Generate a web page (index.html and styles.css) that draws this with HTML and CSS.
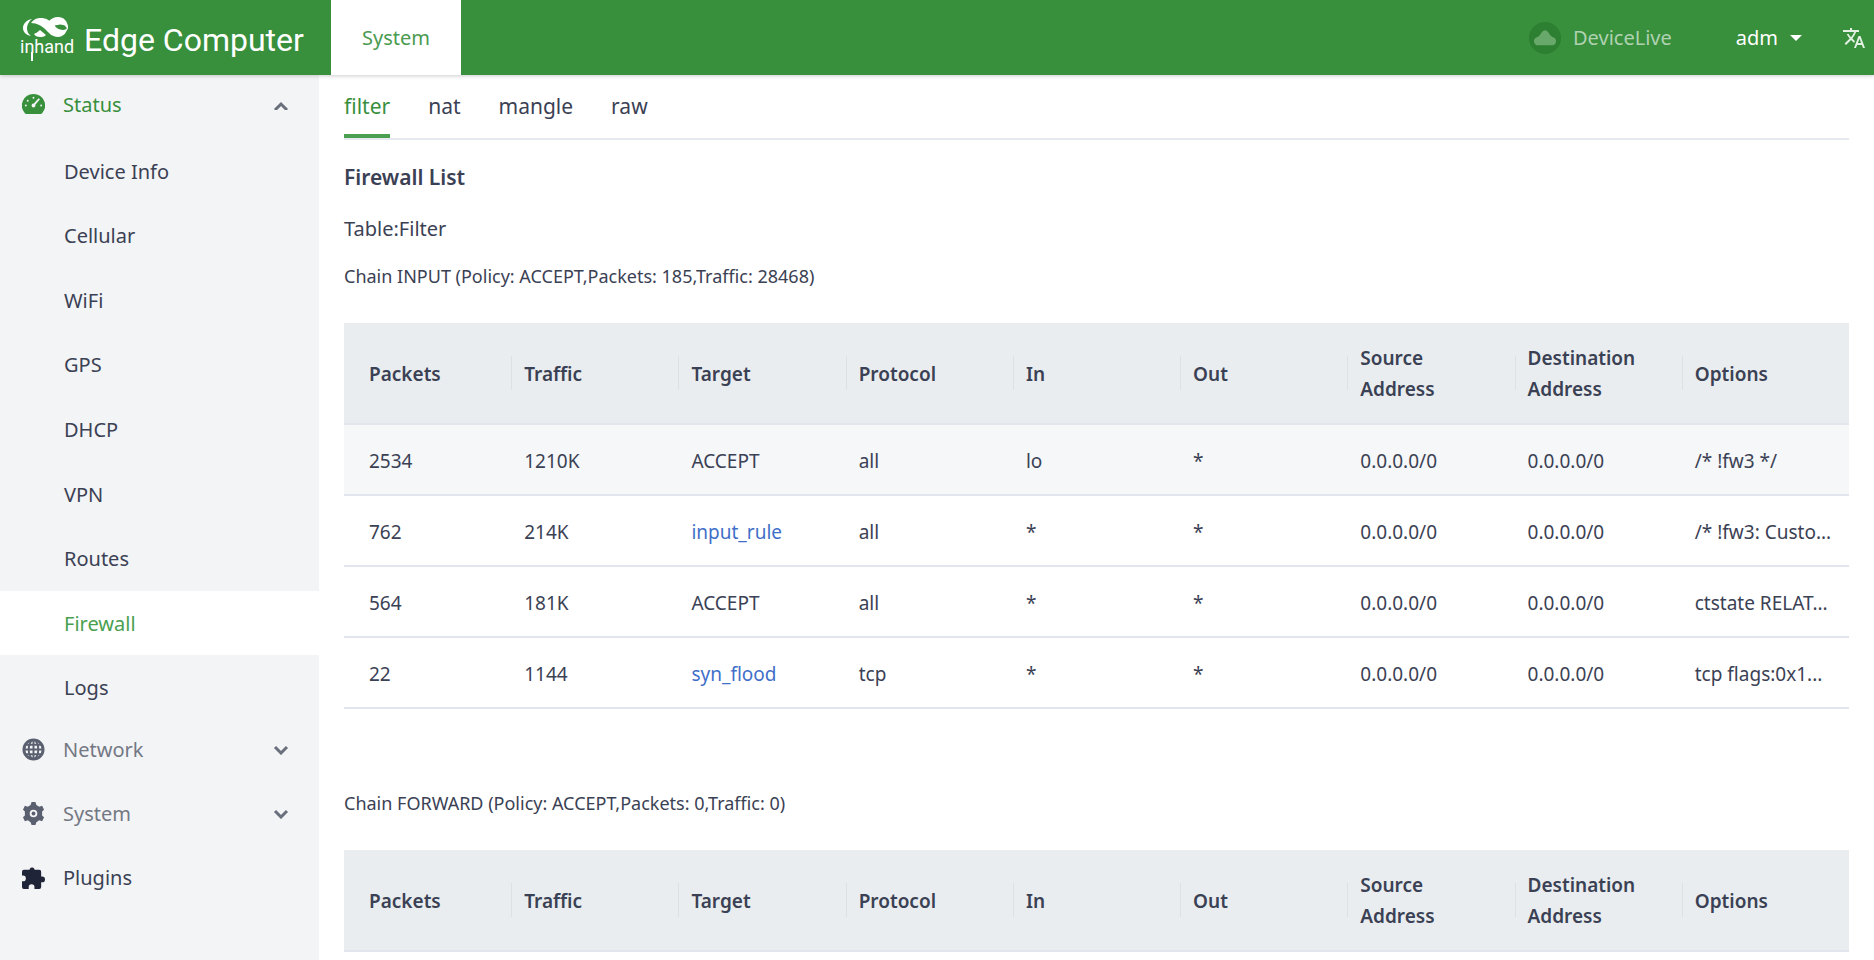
FILE: index.html
```html
<!DOCTYPE html>
<html lang="en">
<head>
  <meta charset="UTF-8" />
  <meta name="viewport" content="width=device-width, initial-scale=1.0" />
  <title>Edge Computer</title>
  <link rel="stylesheet" href="styles.css">
</head>
<body>
  <header class="topbar">
    <a class="brand" href="#">
      <svg class="brand-logo" viewBox="0 0 54 46" role="img" aria-label="inhand">
        <g fill="#fff">
          <path d="M12 2C6 3 3 7 3 11s3 7 8 8C8 17 7 14 7 11s2-7 5-9z"/>
          <path d="M11 6c3-4 6-5 10-5 5 0 8 2 12 6 3 3 6 6 10 6 2 0 4-1 5-4-1 7-5 11-10 11-6 0-9-4-12-7-4-4-9-7-15-7z"/>
          <path d="M29 4c2-2 5-4 9-4 6 0 9 4 10 9v4c-1-3-4-5-8-5-2 0-4 0-6 1z"/>
          <path d="M20 13l6 5c-2 2-4 2-6 2-3 0-5-1-6-3 2-1 4-2 6-4z"/>
        </g>
        <path d="M35 9q5-3 11 0-5 4-9 2z" fill="#388f3c"/>
        <text class="brand-small" x="0" y="36">inhand</text>
        <path d="M12 35v9" stroke="#fff" stroke-width="2"/>
      </svg>
      <span class="brand-name">Edge Computer</span>
    </a>
    <a class="top-tab" href="#">System</a>
    <div class="top-right">
      <a class="device-live" href="#">
        <span class="cloud">
          <svg viewBox="0 0 24 24" width="22" height="22" aria-hidden="true"><path d="M19 20H5a4 4 0 0 1-1-9q2-1 3-3 5-9 10 0 1 2 3 3a4 4 0 0 1-1 9z" fill="#68a96b"/></svg>
        </span>
        DeviceLive
      </a>
      <button class="user-btn" type="button">adm <span class="caret"></span></button>
      <button class="lang-btn" type="button" aria-label="Language">
        <svg viewBox="0 0 24 24" width="24" height="24" aria-hidden="true"><path fill="#e4f0e4" d="M12.87 15.07l-2.54-2.51.03-.03A17.52 17.52 0 0 0 14.07 6H17V4h-7V2H8v2H1v2h11.17C11.5 7.92 10.44 9.75 9 11.35 8.07 10.32 7.3 9.19 6.69 8h-2c.73 1.63 1.73 3.17 2.98 4.56l-5.09 5.02L4 19l5-5 3.11 3.11.76-2.04zM18.5 10h-2L12 22h2l1.12-3h4.75L21 22h2l-4.5-12zm-2.62 7l1.62-4.33L19.12 17h-3.24z"/></svg>
      </button>
    </div>
  </header>

  <div class="layout">
    <nav class="sidebar">
      <button class="menu-head active" type="button">
        <svg class="menu-icon" viewBox="0 0 24 24" aria-hidden="true"><path d="M12 1a12 12 0 0 0-9 20q1 1 2 1h14q1 0 2-1A12 12 0 0 0 12 1z" fill="#388f3c"/><g fill="#f3f4f6"><circle cx="4" cy="13" r="1"/><circle cx="6" cy="8" r="1"/><circle cx="12" cy="5" r="1"/><circle cx="20" cy="13" r="1"/><circle cx="12" cy="13" r="2"/></g><path d="M12 13l6-7" stroke="#f3f4f6" stroke-width="2"/></svg>
        <span>Status</span>
        <svg class="arrow" viewBox="0 0 16 12" aria-hidden="true"><path d="M2 12l6-6 6 6" fill="none" stroke="#6a6f7c" stroke-width="3"/></svg>
      </button>
      <ul class="submenu">
        <li><a href="#">Device Info</a></li>
        <li><a href="#">Cellular</a></li>
        <li><a href="#">WiFi</a></li>
        <li><a href="#">GPS</a></li>
        <li><a href="#">DHCP</a></li>
        <li><a href="#">VPN</a></li>
        <li><a href="#">Routes</a></li>
        <li><a class="current" href="#">Firewall</a></li>
        <li><a href="#">Logs</a></li>
      </ul>
      <button class="menu-head" type="button">
        <svg class="menu-icon" viewBox="0 0 24 24" aria-hidden="true"><g fill="none" stroke="#5a6070" stroke-width="2"><circle cx="12" cy="12" r="10" stroke-width="3"/><ellipse cx="12" cy="12" rx="5" ry="10"/><path d="M12 2v20M2 12h20M4 7h16M4 17h16"/></g></svg>
        <span>Network</span>
        <svg class="arrow" viewBox="0 0 16 12" aria-hidden="true"><path d="M2 4l6 6 6-6" fill="none" stroke="#6a6f7c" stroke-width="3"/></svg>
      </button>
      <button class="menu-head" type="button">
        <svg class="menu-icon" viewBox="0 0 24 24" aria-hidden="true"><path fill="#5a6070" fill-rule="evenodd" d="M10 0h4l1 3 3 2 3-1 2 4-2 2v4l2 2-2 4-3-1-3 2-1 3h-4l-1-3-3-2-3 1-2-4 2-2v-4L1 8l2-4 3 1 3-2zM12 8a4 4 0 1 0 0 8 4 4 0 0 0 0-8z"/><circle cx="12" cy="12" r="2" fill="#5a6070"/></svg>
        <span>System</span>
        <svg class="arrow" viewBox="0 0 16 12" aria-hidden="true"><path d="M2 4l6 6 6-6" fill="none" stroke="#6a6f7c" stroke-width="3"/></svg>
      </button>
      <a class="menu-head dark" href="#">
        <svg class="menu-icon" viewBox="0 0 24 24" aria-hidden="true"><path fill="#1f2438" d="M21 11h-1V6a2 2 0 0 0-2-2h-5V3a3 3 0 0 0-5 0v1H2a2 2 0 0 0-2 2v4h1a3 3 0 0 1 0 6H0v6a2 2 0 0 0 2 2h5v-2a3 3 0 0 1 6 0v2h5a2 2 0 0 0 2-2v-5h1a3 3 0 0 0 0-6z"/></svg>
        <span>Plugins</span>
      </a>
    </nav>

    <main class="content">
      <div class="tabs">
        <a class="tab selected" href="#">filter</a>
        <a class="tab" href="#">nat</a>
        <a class="tab" href="#">mangle</a>
        <a class="tab" href="#">raw</a>
      </div>

      <h1>Firewall List</h1>
      <p class="table-name">Table:Filter</p>

      <section class="chain">
        <h2>Chain INPUT (Policy: ACCEPT,Packets: 185,Traffic: 28468)</h2>
        <table>
          <thead>
            <tr><th>Packets</th><th>Traffic</th><th>Target</th><th>Protocol</th><th>In</th><th>Out</th><th>Source Address</th><th>Destination Address</th><th>Options</th></tr>
          </thead>
          <tbody>
            <tr class="hovered"><td>2534</td><td>1210K</td><td>ACCEPT</td><td>all</td><td>lo</td><td>*</td><td>0.0.0.0/0</td><td>0.0.0.0/0</td><td>/* !fw3 */</td></tr>
            <tr><td>762</td><td>214K</td><td><a href="#">input_rule</a></td><td>all</td><td>*</td><td>*</td><td>0.0.0.0/0</td><td>0.0.0.0/0</td><td>/* !fw3: Custo...</td></tr>
            <tr><td>564</td><td>181K</td><td>ACCEPT</td><td>all</td><td>*</td><td>*</td><td>0.0.0.0/0</td><td>0.0.0.0/0</td><td>ctstate RELAT...</td></tr>
            <tr><td>22</td><td>1144</td><td><a href="#">syn_flood</a></td><td>tcp</td><td>*</td><td>*</td><td>0.0.0.0/0</td><td>0.0.0.0/0</td><td>tcp flags:0x1...</td></tr>
          </tbody>
        </table>
      </section>

      <section class="chain">
        <h2>Chain FORWARD (Policy: ACCEPT,Packets: 0,Traffic: 0)</h2>
        <table>
          <thead>
            <tr><th>Packets</th><th>Traffic</th><th>Target</th><th>Protocol</th><th>In</th><th>Out</th><th>Source Address</th><th>Destination Address</th><th>Options</th></tr>
          </thead>
        </table>
      </section>
    </main>
  </div>
</body>
</html>
```
FILE: styles.css
```css
* {
  box-sizing: border-box;
}
body {
  margin: 0;
  height: 100vh;
  display: flex;
  flex-direction: column;
  overflow: hidden;
  font-family: "Noto Sans", "Open Sans", sans-serif;
  font-size: 20px;
  color: #3b4154;
  background-color: #fff;
}
a {
  color: inherit;
  text-decoration: none;
}
button {
  font: inherit;
  color: inherit;
  background: none;
  border: 0;
  padding: 0;
  cursor: pointer;
}
.topbar {
  display: flex;
  flex: none;
  height: 75px;
  background-color: #388f3c;
  color: #fff;
  box-shadow: 0 1px 4px rgba(0, 0, 0, 0.2);
  position: relative;
}
.brand {
  width: 331px;
  padding: 4px 0 0 20px;
  display: flex;
  align-items: center;
  gap: 10px;
}
.brand-logo {
  width: 54px;
  height: 46px;
}
.brand-small {
  font-family: "Roboto", sans-serif;
  font-size: 18px;
  fill: #fff;
}
.brand-name {
  font-family: "Roboto", sans-serif;
  font-size: 32px;
  white-space: nowrap;
}
.top-tab {
  width: 130px;
  display: flex;
  align-items: center;
  justify-content: center;
  background-color: #fff;
  color: #4a9a50;
}
.top-right {
  margin-left: auto;
  padding-right: 8px;
  display: flex;
  align-items: center;
}
.device-live {
  display: flex;
  align-items: center;
  gap: 12px;
  color: #afd2b1;
}
.cloud {
  width: 32px;
  height: 32px;
  border-radius: 50%;
  background-color: #2d7f31;
  display: flex;
  align-items: center;
  justify-content: center;
}
.user-btn {
  margin-left: 64px;
  display: flex;
  align-items: center;
  gap: 12px;
}
.caret {
  border: 6px solid transparent;
  border-top-color: #fff;
  border-bottom: 0;
}
.lang-btn {
  margin-left: 40px;
  display: flex;
}
.layout {
  flex: 1;
  display: flex;
  min-height: 0;
}
.sidebar {
  flex: none;
  width: 319px;
  background-color: #f3f4f6;
}
.menu-head {
  width: 100%;
  height: 58px;
  margin-bottom: 6px;
  padding: 0 30px 0 22px;
  display: flex;
  align-items: center;
  gap: 18px;
  color: #737884;
}
.menu-head.active {
  color: #388f3c;
}
.menu-head.dark {
  color: #3b4154;
}
.menu-icon {
  width: 23px;
  height: 23px;
}
.arrow {
  width: 16px;
  height: 12px;
  margin-left: auto;
}
.submenu {
  list-style: none;
  margin: 0;
  padding: 0;
  height: 581px;
  display: grid;
}
.submenu a {
  height: 100%;
  padding-left: 64px;
  display: flex;
  align-items: center;
}
.submenu .current {
  background-color: #fff;
  color: #4a9f50;
}
.content {
  flex: 1;
  min-width: 0;
  padding: 0 25px;
}
.tabs {
  height: 65px;
  display: flex;
  gap: 38px;
  font-size: 21px;
  border-bottom: 2px solid #e6eaee;
}
.tab {
  height: 63px;
  line-height: 62px;
}
.tab.selected {
  color: #388f3c;
  border-bottom: 4px solid #4a9f50;
}
h1 {
  margin: 23px 0 0;
  font-size: 21px;
  line-height: 28px;
  font-weight: 600;
}
.table-name {
  margin: 24px 0 0;
  line-height: 28px;
}
.chain h2 {
  margin: 19px 0 33px;
  font-size: 18px;
  line-height: 28px;
  font-weight: 400;
}
.chain + .chain h2 {
  margin-top: 80px;
}
table {
  width: 100%;
  table-layout: fixed;
  border-collapse: separate;
  border-spacing: 0;
}
th, td {
  padding: 2px 13px 0;
  text-align: left;
  border-bottom: 2px solid #e3e5ed;
}
th:first-child, td:first-child {
  padding-left: 25px;
}
th {
  height: 102px;
  font-size: 19px;
  line-height: 31px;
  font-weight: 600;
  background: #e9edef linear-gradient(#dde1e4, #dde1e4) no-repeat left center / 1px 34px;
}
th:first-child {
  background-image: none;
}
td {
  height: 71px;
  font-size: 19px;
  white-space: nowrap;
  overflow: hidden;
  text-overflow: ellipsis;
}
td a {
  color: #3f6fc8;
}
.hovered {
  background-color: #f5f7f9;
}
```
